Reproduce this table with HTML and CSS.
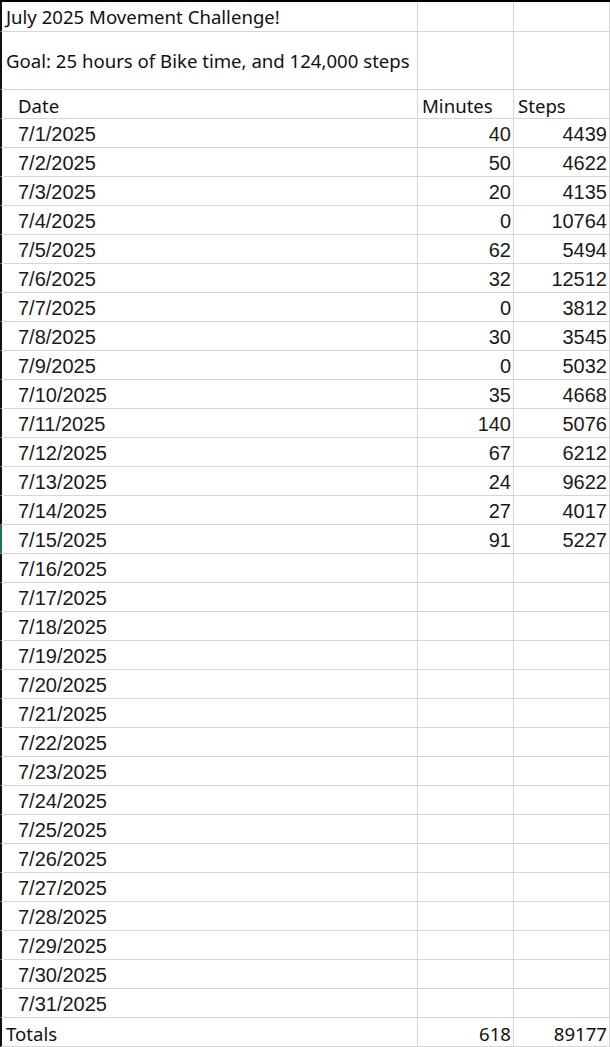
FILE: index.html
```html
<!DOCTYPE html>
<html>
<head>
<meta charset="utf-8">
<link rel="stylesheet" href="styles.css">
</head>
<body>
<div class="sheet">
  <div class="c first t title">July 2025 Movement Challenge!</div><div class="c title"></div><div class="c title"></div>
  <div class="c first t goal">Goal: 25 hours of Bike time, and 124,000 steps</div><div class="c goal"></div><div class="c goal"></div>
  <div class="c first t ind">Date</div><div class="c t hdr">Minutes</div><div class="c t hdr">Steps</div>
  <div class="c first d">7/1/2025</div><div class="c n">40</div><div class="c n">4439</div>
  <div class="c first d">7/2/2025</div><div class="c n">50</div><div class="c n">4622</div>
  <div class="c first d">7/3/2025</div><div class="c n">20</div><div class="c n">4135</div>
  <div class="c first d">7/4/2025</div><div class="c n">0</div><div class="c n">10764</div>
  <div class="c first d">7/5/2025</div><div class="c n">62</div><div class="c n">5494</div>
  <div class="c first d">7/6/2025</div><div class="c n">32</div><div class="c n">12512</div>
  <div class="c first d">7/7/2025</div><div class="c n">0</div><div class="c n">3812</div>
  <div class="c first d">7/8/2025</div><div class="c n">30</div><div class="c n">3545</div>
  <div class="c first d">7/9/2025</div><div class="c n">0</div><div class="c n">5032</div>
  <div class="c first d">7/10/2025</div><div class="c n">35</div><div class="c n">4668</div>
  <div class="c first d">7/11/2025</div><div class="c n">140</div><div class="c n">5076</div>
  <div class="c first d">7/12/2025</div><div class="c n">67</div><div class="c n">6212</div>
  <div class="c first d">7/13/2025</div><div class="c n">24</div><div class="c n">9622</div>
  <div class="c first d">7/14/2025</div><div class="c n">27</div><div class="c n">4017</div>
  <div class="c first d active">7/15/2025</div><div class="c n">91</div><div class="c n">5227</div>
  <div class="c first d">7/16/2025</div><div class="c"></div><div class="c"></div>
  <div class="c first d">7/17/2025</div><div class="c"></div><div class="c"></div>
  <div class="c first d">7/18/2025</div><div class="c"></div><div class="c"></div>
  <div class="c first d">7/19/2025</div><div class="c"></div><div class="c"></div>
  <div class="c first d">7/20/2025</div><div class="c"></div><div class="c"></div>
  <div class="c first d">7/21/2025</div><div class="c"></div><div class="c"></div>
  <div class="c first d">7/22/2025</div><div class="c"></div><div class="c"></div>
  <div class="c first d">7/23/2025</div><div class="c"></div><div class="c"></div>
  <div class="c first d">7/24/2025</div><div class="c"></div><div class="c"></div>
  <div class="c first d">7/25/2025</div><div class="c"></div><div class="c"></div>
  <div class="c first d">7/26/2025</div><div class="c"></div><div class="c"></div>
  <div class="c first d">7/27/2025</div><div class="c"></div><div class="c"></div>
  <div class="c first d">7/28/2025</div><div class="c"></div><div class="c"></div>
  <div class="c first d">7/29/2025</div><div class="c"></div><div class="c"></div>
  <div class="c first d">7/30/2025</div><div class="c"></div><div class="c"></div>
  <div class="c first d">7/31/2025</div><div class="c"></div><div class="c"></div>
  <div class="c first t">Totals</div><div class="c t num">618</div><div class="c t num">89177</div>
</div>
</body>
</html>
```
FILE: styles.css
```css
* { box-sizing: border-box; }
html, body { margin: 0; padding: 0; background: #fff; }
.sheet {
  width: 610px;
  height: 1047px;
  overflow: hidden;
  border-top: 2px solid #000;
  display: grid;
  grid-template-columns: 418px 96px 96px;
  grid-template-rows: 30px 58px repeat(33, 29px);
}
.c {
  border-right: 1px solid #d6d6d6;
  border-bottom: 1px solid #d6d6d6;
  display: flex;
  align-items: center;
  padding-top: 2px;
  white-space: nowrap;
  color: #000;
}
.first { border-left: 2px solid #111; padding-left: 4px; }
.first.active { border-left-color: #217346; }
.title, .goal { padding-top: 0; }
.t { font-family: "Noto Sans", "Open Sans", sans-serif; font-size: 18.6px; color: #111; }
.ind { padding-left: 16px; }
.hdr { padding-left: 4px; }
.d { font-family: "Liberation Sans", Arial, sans-serif; font-size: 20px; padding-left: 16px; color: #1a1a1a; }
.n { font-family: "Liberation Sans", Arial, sans-serif; font-size: 20px; justify-content: flex-end; padding-right: 2px; color: #1a1a1a; }
.num { justify-content: flex-end; padding-right: 2px; }
```
